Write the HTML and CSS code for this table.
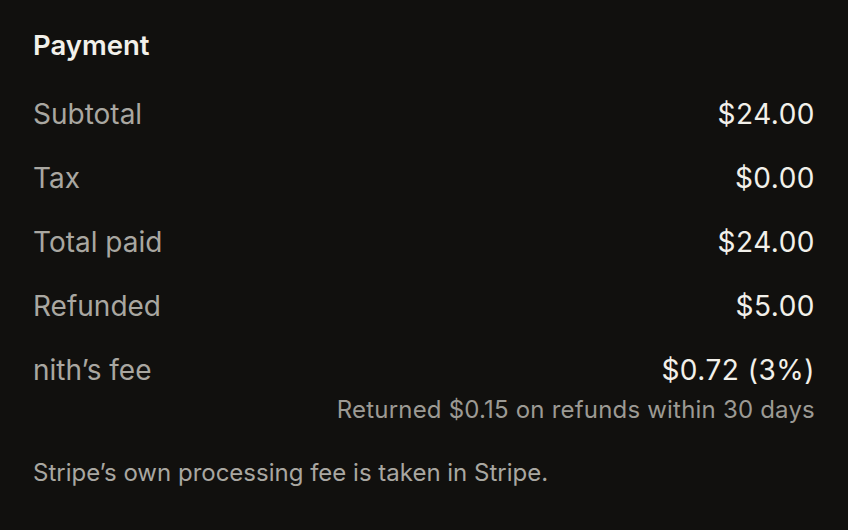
FILE: index.html
```html
<!DOCTYPE html>
<html>
<head>
<meta charset="utf-8">
<link rel="stylesheet" href="styles.css">
</head>
<body>
<div class="card">
  <h2 class="title">Payment</h2>
  <div class="rows">
    <div class="row"><span class="label">Subtotal</span><span class="value">$24.00</span></div>
    <div class="row"><span class="label">Tax</span><span class="value">$0.00</span></div>
    <div class="row"><span class="label">Total paid</span><span class="value">$24.00</span></div>
    <div class="row"><span class="label">Refunded</span><span class="value">$5.00</span></div>
    <div class="row fee">
      <span class="label">nith’s fee</span>
      <div class="fee-right">
        <span class="value">$0.72 (3%)</span>
        <span class="sub">Returned $0.15 on refunds within 30 days</span>
      </div>
    </div>
  </div>
  <p class="note">Stripe’s own processing fee is taken in Stripe.</p>
</div>
</body>
</html>
```
FILE: styles.css
```css
html, body {
  margin: 0;
  padding: 0;
  background: #11100e;
}
body {
  font-family: Inter, "Noto Sans", sans-serif;
  width: 848px;
  height: 530px;
  overflow: hidden;
}
.card {
  padding: 29px 33px 0 33px;
}
.title {
  margin: 0;
  font-size: 27.5px;
  line-height: 32px;
  font-weight: 600;
  color: #f2f0ea;
}
.rows {
  margin-top: 35px;
  display: flex;
  flex-direction: column;
  gap: 28px;
}
.row {
  display: flex;
  justify-content: space-between;
  align-items: flex-start;
}
.label {
  font-size: 28px;
  line-height: 36px;
  color: #a9a7a1;
}
.value {
  font-size: 28px;
  line-height: 36px;
  letter-spacing: 0.5px;
  color: #f2f0ea;
}
.fee-right {
  display: flex;
  flex-direction: column;
  align-items: flex-end;
}
.sub {
  margin-top: 8px;
  font-size: 24px;
  line-height: 28px;
  letter-spacing: 0.2px;
  color: #9c9a94;
}
.note {
  margin: 33px 0 0 0;
  font-size: 24px;
  line-height: 32px;
  color: #a9a7a1;
}
```
